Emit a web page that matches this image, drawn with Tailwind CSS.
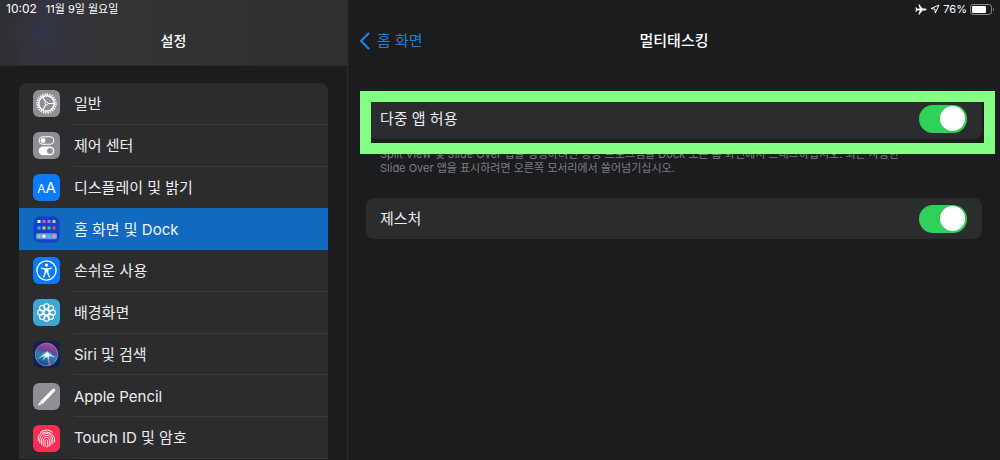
<!DOCTYPE html>
<html lang="ko">
<head>
<meta charset="utf-8">
<meta name="viewport" content="width=device-width, initial-scale=1">
<title>설정</title>
<script src="https://cdn.jsdelivr.net/npm/@tailwindcss/browser@4"></script>
</head>
<body class="flex h-screen overflow-hidden bg-[#1b1c1e] font-['Inter','Noto_Sans_CJK_KR',sans-serif] text-[15px] text-[#ededee]">

<aside class="flex w-[348px] shrink-0 flex-col border-r border-[#2b2c2e]">
  <header class="h-[66px] shrink-0 border-b border-[#28292b] bg-[#313234] bg-linear-to-r from-[#2e2f31] via-[#333436] via-30% to-[#2e2f31]">
    <div class="h-full bg-[radial-gradient(ellipse_45px_70px_at_45px_34px,#343546,transparent)]">
      <div class="flex h-[18px] items-center gap-[9px] pl-[6px] text-[11px] text-white">
        <time class="text-[12px]">10:02</time><span>11월 9일 월요일</span>
      </div>
      <h1 class="pt-[12px] text-center text-[14px] leading-[22px] font-medium text-white">설정</h1>
    </div>
  </header>

  <nav class="mt-[17px] mr-[19px] ml-[19px] grid h-[376px] shrink-0 auto-rows-fr overflow-hidden rounded-t-[8px] bg-[#2b2c2e]">
    <a href="#general" class="flex items-center gap-[14px] pl-[14px]">
      <svg class="size-[27px] shrink-0" viewBox="0 0 27 27" fill="none"><rect width="27" height="27" rx="6" fill="#8e8e93"/><circle cx="13.5" cy="13.5" r="9.4" stroke="#fff" stroke-width="1.8" stroke-dasharray="1.35 1.11"/><circle cx="13.5" cy="13.5" r="7.7" stroke="#fff" stroke-width="1.5"/><circle cx="13.5" cy="13.5" r="1.5" fill="#8e8e93" stroke="#fff"/><path d="M15 13.5h6M12.7 12.2 9.8 7.1M12.7 14.8 9.8 19.9" stroke="#fff" stroke-width="1.1"/></svg>
      <span class="flex h-full flex-1 items-center border-b border-[#3a3b3d] pt-[2px]">일반</span>
    </a>
    <a href="#control-center" class="flex items-center gap-[14px] pl-[14px]">
      <svg class="size-[27px] shrink-0" viewBox="0 0 27 27" fill="none"><rect width="27" height="27" rx="6" fill="#8e8e93"/><rect x="6.2" y="4.7" width="14.6" height="7.6" rx="3.8" stroke="#fff" stroke-width="1.1"/><circle cx="10" cy="8.5" r="2.4" fill="#fff"/><rect x="5.7" y="14.5" width="15.6" height="8.8" rx="4.4" fill="#fff"/><circle cx="17" cy="18.9" r="2.9" fill="#8e8e93"/></svg>
      <span class="flex h-full flex-1 items-center border-b border-[#3a3b3d] pt-[2px]">제어 센터</span>
    </a>
    <a href="#display" class="flex items-center gap-[14px] pl-[14px]">
      <span class="flex size-[27px] shrink-0 items-baseline justify-center rounded-[6px] bg-[#0a7aff] text-white" aria-hidden="true"><span class="text-[12px] leading-[27px]">A</span><span class="text-[15px] leading-[27px]">A</span></span>
      <span class="flex h-full flex-1 items-center pt-[2px]">디스플레이 및 밝기</span>
    </a>
    <a href="#home-dock" aria-current="page" class="flex items-center gap-[14px] bg-[#1269c0] pl-[14px] text-[#f1f5fa]">
      <svg class="size-[27px] shrink-0" viewBox="0 0 27 27"><rect x=".5" y=".5" width="26" height="26" rx="6" fill="#1540c8"/><rect x="3" y="17.3" width="21" height="6" rx="1.5" fill="#7195dc"/><g><path fill="#f2f4ff" d="M4.5 4h3v3h-3z"/><path fill="#e25997" d="M9.5 4h3v3h-3z"/><path fill="#a979ee" d="M14.5 4h3v3h-3z"/><path fill="#a8dca4" d="M19.5 4h3v3h-3z"/><path fill="#35aee9" d="M4.5 10.5h3v3h-3z"/><path fill="#f3bd45" d="M9.5 10.5h3v3h-3z"/><path fill="#46c5b6" d="M14.5 10.5h3v3h-3z"/><path fill="#e94e60" d="M19.5 10.5h3v3h-3z"/><path fill="#79dda9" d="M4.5 18.8h3v3h-3z"/><path fill="#fff" d="M9.5 18.8h3v3h-3z"/><path fill="#4fb8f5" d="M14.5 18.8h3v3h-3z"/><path fill="#f19a8c" d="M19.5 18.8h3v3h-3z"/></g></svg>
      <span class="flex h-full flex-1 items-center pt-[2px]">홈 화면 및 Dock</span>
    </a>
    <a href="#accessibility" class="flex items-center gap-[14px] pl-[14px]">
      <svg class="size-[27px] shrink-0" viewBox="0 0 27 27" fill="none"><rect width="27" height="27" rx="6" fill="#0a7aff"/><circle cx="13.5" cy="13.5" r="9.6" stroke="#fff" stroke-width="1.3"/><circle cx="13.5" cy="8.1" r="1.6" fill="#fff"/><path d="M8 10.4 12 11.3h3l4-.9.2 1.1-3.8 1.2v2.6l1.7 4.9-1.1.4-2.2-4.8h-.6L11 20.6l-1.1-.4 1.7-4.9v-2.6l-3.8-1.2z" fill="#fff"/></svg>
      <span class="flex h-full flex-1 items-center border-b border-[#3a3b3d] pt-[2px]">손쉬운 사용</span>
    </a>
    <a href="#wallpaper" class="flex items-center gap-[14px] pl-[14px]">
      <svg class="size-[27px] shrink-0" viewBox="0 0 27 27" fill="none"><rect width="27" height="27" rx="6" fill="#3ea6d1"/><g stroke="#fff" stroke-width="1.1"><circle cx="13.5" cy="7.4" r="2.7"/><circle cx="17.8" cy="9.2" r="2.7"/><circle cx="19.6" cy="13.5" r="2.7"/><circle cx="17.8" cy="17.8" r="2.7"/><circle cx="13.5" cy="19.6" r="2.7"/><circle cx="9.2" cy="17.8" r="2.7"/><circle cx="7.4" cy="13.5" r="2.7"/><circle cx="9.2" cy="9.2" r="2.7"/><circle cx="13.5" cy="13.5" r="2.6"/></g></svg>
      <span class="flex h-full flex-1 items-center border-b border-[#3a3b3d] pt-[2px]">배경화면</span>
    </a>
    <a href="#siri" class="flex items-center gap-[14px] pl-[14px]">
      <svg class="size-[27px] shrink-0" viewBox="0 0 27 27" fill="none"><defs><linearGradient id="orb" x1=".65" y1="0" x2=".35" y2="1"><stop stop-color="#c8389c"/><stop offset=".35" stop-color="#5f459f"/><stop offset=".6" stop-color="#1f8aae"/><stop offset="1" stop-color="#173f8c"/></linearGradient><radialGradient id="glow"><stop stop-color="#fff"/><stop offset=".4" stop-color="#bdeaf5" stop-opacity=".7"/><stop offset="1" stop-color="#3cc0dd" stop-opacity="0"/></radialGradient></defs><rect width="27" height="27" rx="6" fill="#17204a"/><circle cx="13.5" cy="13.5" r="11.3" fill="url(#orb)" stroke="#8796c4" stroke-width=".8"/><ellipse cx="14" cy="13.8" rx="6" ry="4" fill="url(#glow)"/><path d="M3.5 18.5 12.5 12.5l2-2.5 1.5 2.7 7.5 3.8-7.8-1.7.8 8.5-2.5-8-5 4.7 3.3-5.5z" fill="#e9faff" fill-opacity=".85"/><path d="m14 15 3.8 8.5-1.9.8z" fill="#e25ba7"/></svg>
      <span class="flex h-full flex-1 items-center border-b border-[#3a3b3d] pt-[2px]">Siri 및 검색</span>
    </a>
    <a href="#pencil" class="flex items-center gap-[14px] pl-[14px]">
      <svg class="size-[27px] shrink-0" viewBox="0 0 27 27" fill="none"><rect width="27" height="27" rx="6" fill="#8e8e93"/><path d="M20.6 7.2 9.2 19" stroke="#fff" stroke-width="3.3" stroke-linecap="round"/><path d="m7.8 17.8 2.6 2.5-4.6 2.2c-.6.2-.9-.1-.7-.6z" fill="#fff"/><path d="m7 18.8 2 2" stroke="#8e8e93" stroke-width=".7"/></svg>
      <span class="flex h-full flex-1 items-center border-b border-[#3a3b3d] pt-[2px]">Apple Pencil</span>
    </a>
    <a href="#touch-id" class="flex items-center gap-[14px] pl-[14px]">
      <svg class="size-[27px] shrink-0" viewBox="0 0 27 27" fill="none"><rect width="27" height="27" rx="6" fill="#fa2d55"/><g stroke="#fff" stroke-width=".9" stroke-linecap="round"><path d="M7.5 7.2a9 9 0 0 1 12 0"/><path d="M5.2 15.5c-.6-3.5.9-6 3-7.2 3.5-2 8.7-1.4 11.5 1.7 1.7 2 2.1 4 1.8 6.7"/><path d="M6.8 17.8c-.4-4-.2-9.3 6.7-9.3 5.5 0 6.8 4.2 6.2 9.8"/><path d="M8.6 19.5c-.3-4-.9-9 4.9-9s4.8 4.5 4.3 9.5"/><path d="M10.4 20.8c-.2-4.3-.9-8.3 3.1-8.3s2.8 4.5 2.5 8.8"/><path d="M12.2 21.6c-.1-4.4-.4-7.1 1.3-7.1s1 3.4.8 7.5"/></g></svg>
      <span class="flex h-full flex-1 items-center border-b border-[#3a3b3d] pt-[2px]">Touch ID 및 암호</span>
    </a>
  </nav>
</aside>

<main class="min-w-0 flex-1">
  <div class="flex h-[18px] items-center justify-end gap-[3px] pr-[5px] text-[11px] text-white">
    <svg class="h-[11px] w-[12px]" viewBox="0 0 12 11" fill="#fff" aria-label="에어플레인 모드"><path d="M11.5 5.5c0-.6-.8-.9-1.7-.9H7.6L4.5.6H3.4l1.4 4-2.4.1L1.2 3.200H.4l.6 2.300-.6 2.300h.8l1.200-1.500 2.400.1-1.400 4h1.100l3.100-4h2.200c.9 0 1.700-.3 1.700-.9z"/></svg>
    <svg class="size-[10px]" viewBox="0 0 10 10" fill="none" stroke="#fff" aria-label="위치"><path d="M9 1 1 4.6l3.9.5.4 3.9z" stroke-linejoin="round"/></svg>
    <span>76%</span>
    <svg class="h-[11px] w-[25px]" viewBox="0 0 25 11" fill="none" aria-label="배터리"><rect x=".5" y=".5" width="21" height="10" rx="2.8" stroke="#8b8b8d"/><rect x="2" y="2" width="14" height="7" rx="1.3" fill="#fff"/><path d="M23 3.7c1.3.6 1.3 3 0 3.6z" fill="#8b8b8d"/></svg>
  </div>
  <header class="grid h-[48px] grid-cols-[1fr_auto_1fr] items-start pt-[12px]">
    <a href="#home-dock" class="flex items-center gap-[7px] pl-[11px] text-[15px] leading-[22px] text-[#1f7fe0]">
      <svg class="h-[18px] w-[11px]" viewBox="0 0 11 18" fill="none" stroke="currentColor" stroke-width="2.3" stroke-linecap="round" stroke-linejoin="round"><path d="M9.5 1.5 2 9l7.5 7.5"/></svg>홈 화면</a>
    <h2 class="text-[15px] leading-[22px] font-medium text-white">멀티태스킹</h2>
  </header>

  <div class="pt-[32px] pr-[18px] pl-[18px]">
    <section class="relative flex h-[41px] items-center justify-between rounded-[8px] bg-[#2b2c2e] pr-[15px] pl-[14px]">
      <label for="multi" class="pt-[2px]">다중 앱 허용</label>
      <input id="multi" type="checkbox" role="switch" checked class="flex h-[28px] w-[48px] appearance-none items-center rounded-full bg-[#636366] px-[2px] before:size-[25px] before:rounded-full before:bg-white checked:justify-end checked:bg-[#30d158]">
      <span class="pointer-events-none absolute -top-[7px] -right-[13px] -bottom-[15px] -left-[6px] border-[11px] border-[#82ff82]"></span>
    </section>
    <p class="mt-[8px] pr-[14px] pl-[14px] text-[11px] leading-[14px] text-[#7d7e82]">Split View 및 Slide Over 앱을 생성하려면 응용 프로그램을 Dock 또는 홈 화면에서 드래그하십시오. 최근 사용한<br>Slide Over 앱을 표시하려면 오른쪽 모서리에서 쓸어넘기십시오.</p>
    <section class="mt-[23px] flex h-[41px] items-center justify-between rounded-[8px] bg-[#2b2c2e] pr-[15px] pl-[14px]">
      <label for="gesture" class="pt-[2px]">제스처</label>
      <input id="gesture" type="checkbox" role="switch" checked class="flex h-[28px] w-[48px] appearance-none items-center rounded-full bg-[#636366] px-[2px] before:size-[25px] before:rounded-full before:bg-white checked:justify-end checked:bg-[#30d158]">
    </section>
  </div>
</main>
</body>
</html>
